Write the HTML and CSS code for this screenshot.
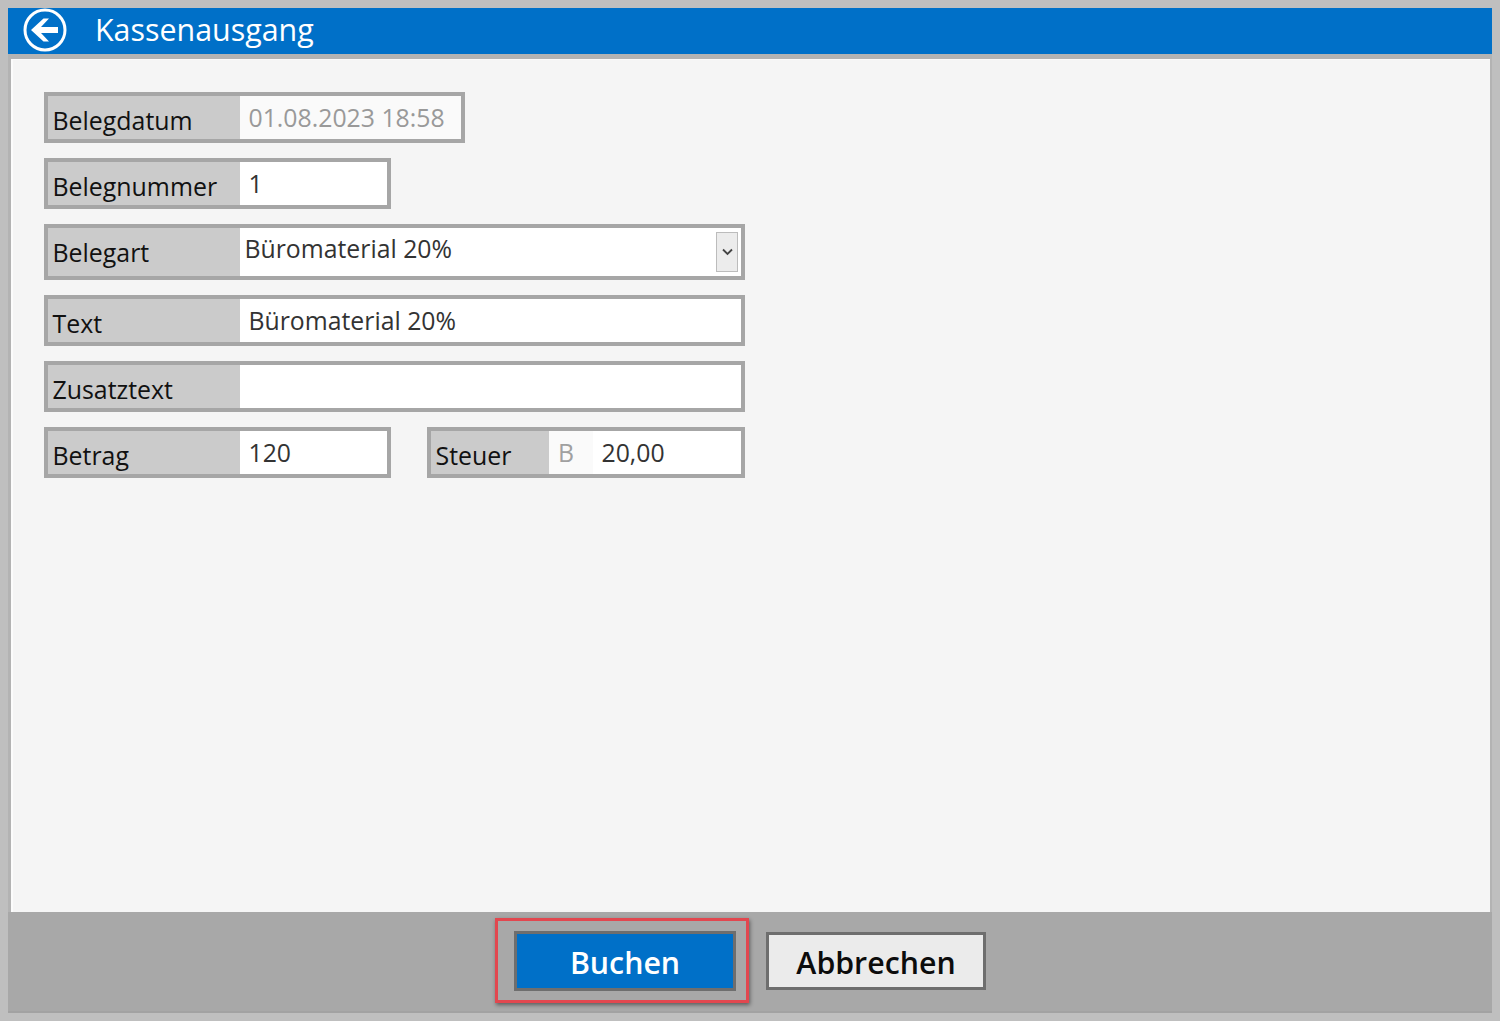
FILE: index.html
```html
<!DOCTYPE html>
<html lang="de">
<head>
<meta charset="utf-8">
<title>Kassenausgang</title>
<link rel="stylesheet" href="styles.css">
</head>
<body>
<div class="window">
  <header class="titlebar">
    <svg class="back" width="46" height="46" viewBox="0 0 46 46" aria-hidden="true">
      <circle cx="22" cy="22" r="20" fill="none" stroke="#fff" stroke-width="3"/>
      <path d="M8 22 L20.5 10.5 L26 10.5 L18 19 L35 19 L35 25 L18 25 L26 33.5 L20.5 33.5 Z" fill="#fff"/>
    </svg>
    <h1 class="title">Kassenausgang</h1>
  </header>
  <main class="content">
    <div class="field w-date">
      <span class="label">Belegdatum</span>
      <span class="value readonly">01.08.2023 18:58</span>
    </div>
    <div class="field w-short">
      <span class="label">Belegnummer</span>
      <span class="value">1</span>
    </div>
    <div class="field w-full tall">
      <span class="label">Belegart</span>
      <span class="value select">Büromaterial 20%</span>
      <span class="dropdown">
        <svg width="11" height="8" viewBox="0 0 11 8" aria-hidden="true"><path d="M1 1.5 L5.5 6 L10 1.5" fill="none" stroke="#444" stroke-width="1.8"/></svg>
      </span>
    </div>
    <div class="field w-full">
      <span class="label">Text</span>
      <span class="value">Büromaterial 20%</span>
    </div>
    <div class="field w-full">
      <span class="label">Zusatztext</span>
      <span class="value"></span>
    </div>
    <div class="pair">
      <div class="field w-short">
        <span class="label">Betrag</span>
        <span class="value">120</span>
      </div>
      <div class="field w-tax">
        <span class="label small">Steuer</span>
        <span class="code">B</span>
        <span class="value">20,00</span>
      </div>
    </div>
  </main>
  <footer class="actions">
    <span class="highlighted">
      <button class="btn primary" type="button">Buchen</button>
    </span>
    <button class="btn secondary" type="button">Abbrechen</button>
  </footer>
</div>
</body>
</html>
```
FILE: styles.css
```css
*, *::after { box-sizing: border-box; }
html, body { margin: 0; height: 100%; }
body {
  background: #bfbfbf;
  padding: 8px;
  font-family: "Open Sans", "Noto Sans", sans-serif;
  color: #1a1a1a;
}
.window {
  height: 1005px;
  display: flex;
  flex-direction: column;
}
.titlebar {
  height: 46px;
  background: #0070c8;
  display: flex;
  align-items: center;
  padding-left: 15px;
  flex: none;
}
.back { flex: none; }
.title {
  margin: 0 0 2px 26px;
  font-size: 30.4px;
  font-weight: 400;
  color: #fff;
  line-height: 42px;
}
.content {
  flex: 1;
  background: #f5f5f5;
  border-top: 5px solid #b3b3b3;
  border-left: 3px solid #b3b3b3;
  border-right: 2px solid #b3b3b3;
  box-shadow: inset 2px 1px 0 #fcfcfc;
  padding: 33px 0 0 33px;
  display: flex;
  flex-direction: column;
  gap: 15px;
}
.field {
  height: 51px;
  display: flex;
  border: 4px solid #a6a6a6;
  background: #fff;
  font-size: 24.8px;
}
.field.tall { height: 56px; position: relative; }
.w-date { width: 421px; }
.w-short { width: 347px; }
.w-full { width: 701px; }
.w-tax { width: 318px; }
.pair { display: flex; gap: 36px; }
.label {
  width: 192px;
  flex: none;
  background: #cbcbcb;
  padding: 6px 0 0 4.5px;
  font-size: 24.9px;
  line-height: 36px;
  color: #111;
}
.label.small { width: 118px; }
.value {
  flex: 1;
  padding: 3px 0 0 8.5px;
  line-height: 36px;
  color: #333;
  background: #fff;
}
.value.readonly { color: #999; background: #fafafa; }
.value.select { padding: 2px 0 0 4.5px; }
.code {
  width: 44px;
  flex: none;
  background: #fafafa;
  color: #a0a0a0;
  padding: 3px 0 0 9px;
  line-height: 36px;
}
.dropdown {
  position: absolute;
  right: 3px;
  top: 4px;
  width: 22px;
  height: 40px;
  background: #ececec;
  border: 1px solid #bcbcbc;
  display: flex;
  align-items: center;
  justify-content: center;
}
.actions {
  height: 101px;
  flex: none;
  background: #a8a8a8;
  border-bottom: 2px solid #a2a2a2;
  display: flex;
  align-items: flex-start;
  padding: 19px 0 0 506px;
  gap: 30px;
}
.highlighted {
  position: relative;
  display: block;
  height: 60px;
}
.highlighted::after {
  content: "";
  position: absolute;
  left: -19px;
  top: -13px;
  width: 254px;
  height: 85px;
  border: 3px solid #e2474f;
  box-shadow: 1px 2px 4px rgba(0, 0, 0, 0.45);
  pointer-events: none;
}
.btn {
  display: block;
  font-family: inherit;
  font-size: 30.3px;
  font-weight: 600;
  padding: 4px 0 0;
  border: 3px solid #6e6e6e;
  line-height: 42px;
}
.primary { width: 222px; height: 60px; background: #0070c8; color: #fff; }
.secondary { width: 220px; height: 58px; margin-top: 1px; background: #ebebeb; color: #0c0c0c; }
```
